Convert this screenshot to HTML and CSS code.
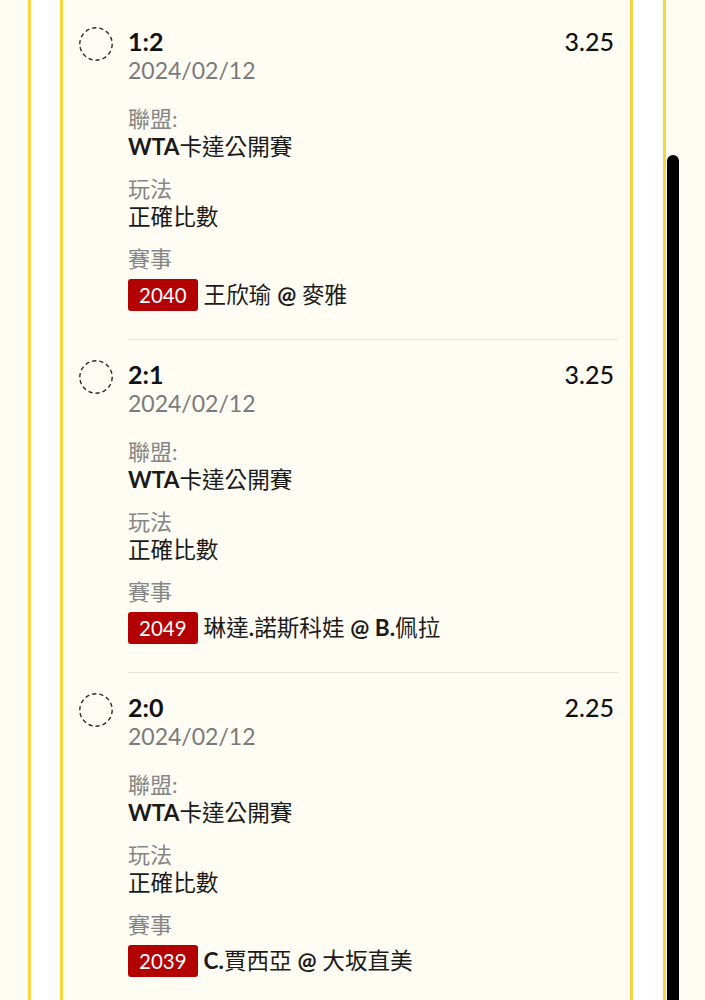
FILE: index.html
```html
<!DOCTYPE html>
<html lang="zh-Hant">
<head>
  <meta charset="UTF-8" />
  <meta name="viewport" content="width=device-width, initial-scale=1.0"/>
  <title>正確比數</title>
  <link rel="stylesheet" href="styles.css">
</head>
<body>

  <div class="shell">
    <div class="panel">
      <ul class="bets">

        <li class="bet">
          <svg class="pick" viewBox="0 0 34 34"><circle cx="17" cy="17" r="16.2"/></svg>
          <div class="bet-body">
            <div class="bet-head">
              <span class="score">1:2</span>
              <span class="odds">3.25</span>
            </div>
            <div class="date">2024/02/12</div>
            <div class="meta">
              <div class="label">聯盟:</div>
              <div class="value"><b>WTA</b>卡達公開賽</div>
            </div>
            <div class="meta">
              <div class="label">玩法</div>
              <div class="value">正確比數</div>
            </div>
            <div class="meta">
              <div class="label">賽事</div>
              <div class="match"><span class="code">2040</span>王欣瑜 <b>@</b> 麥雅</div>
            </div>
          </div>
        </li>

        <li class="bet">
          <svg class="pick" viewBox="0 0 34 34"><circle cx="17" cy="17" r="16.2"/></svg>
          <div class="bet-body">
            <div class="bet-head">
              <span class="score">2:1</span>
              <span class="odds">3.25</span>
            </div>
            <div class="date">2024/02/12</div>
            <div class="meta">
              <div class="label">聯盟:</div>
              <div class="value"><b>WTA</b>卡達公開賽</div>
            </div>
            <div class="meta">
              <div class="label">玩法</div>
              <div class="value">正確比數</div>
            </div>
            <div class="meta">
              <div class="label">賽事</div>
              <div class="match"><span class="code">2049</span>琳達<b>.</b>諾斯科娃 <b>@ B.</b>佩拉</div>
            </div>
          </div>
        </li>

        <li class="bet">
          <svg class="pick" viewBox="0 0 34 34"><circle cx="17" cy="17" r="16.2"/></svg>
          <div class="bet-body">
            <div class="bet-head">
              <span class="score">2:0</span>
              <span class="odds">2.25</span>
            </div>
            <div class="date">2024/02/12</div>
            <div class="meta">
              <div class="label">聯盟:</div>
              <div class="value"><b>WTA</b>卡達公開賽</div>
            </div>
            <div class="meta">
              <div class="label">玩法</div>
              <div class="value">正確比數</div>
            </div>
            <div class="meta">
              <div class="label">賽事</div>
              <div class="match"><span class="code">2039</span><b>C.</b>賈西亞 <b>@</b> 大坂直美</div>
            </div>
          </div>
        </li>

      </ul>
    </div>
  </div>

  <div class="scroll-thumb"></div>

</body>
</html>
```

FILE: styles.css
```css
body {
  margin: 0;
  height: 1000px;
  overflow: hidden;
  background-color: #fefcf3;
  font-family: 'Lato', 'Noto Sans CJK TC', sans-serif;
  color: #1a1a1a;
}

.shell {
  width: 638px;
  min-height: 100%;
  margin-left: 28px;
  padding: 0 30px 0 29px;
  box-sizing: border-box;
  border-left: 3px solid #f6d63c;
  border-right: 3px solid #f6d63c;
  background-color: #fff;
}

.panel {
  min-height: 1000px;
  border-left: 3px solid #f6d63c;
  border-right: 3px solid #f6d63c;
  background-color: #fefcf3;
}

.bets {
  list-style: none;
  margin: 0;
  padding: 7px 12px 0 16px;
}

.bet {
  display: flex;
  align-items: flex-start;
}

.pick {
  flex: none;
  width: 34px;
  height: 34px;
  margin: 20px 15px 0 0;
}

.pick circle {
  fill: none;
  stroke: #2a2a2a;
  stroke-width: 1.4;
  stroke-dasharray: 4.2 3;
}

.bet-body {
  flex: 1;
  padding: 19px 4px 28px 0;
  border-bottom: 1px solid #e6e4dc;
}

.bet-head {
  display: flex;
  justify-content: space-between;
  line-height: 30px;
}

.score {
  font-size: 25px;
  font-weight: 700;
  color: #111;
}

.odds {
  font-size: 25px;
  font-weight: 500;
  color: #111;
}

.date {
  font-size: 23px;
  line-height: 28px;
  color: #7a7a7a;
  margin-bottom: 21px;
}

.meta {
  margin-bottom: 14px;
}

.meta:last-child {
  margin-bottom: 0;
}

.label {
  font-size: 22px;
  line-height: 28px;
  color: #858585;
}

.value {
  font-size: 22.6px;
  line-height: 28px;
  color: #1a1a1a;
}

.match {
  display: flex;
  align-items: center;
  margin-top: 6px;
  font-size: 22.6px;
  line-height: 32px;
  color: #1a1a1a;
  white-space: pre;
}

.code {
  height: 32px;
  padding: 0 11px;
  margin-right: 6px;
  border-radius: 3px;
  background-color: #b30000;
  color: #fff;
  font-size: 20.5px;
  line-height: 32px;
}

.scroll-thumb {
  position: fixed;
  left: 667px;
  top: 155px;
  width: 12px;
  height: 860px;
  border-radius: 6px;
  background-color: #000;
}
```
